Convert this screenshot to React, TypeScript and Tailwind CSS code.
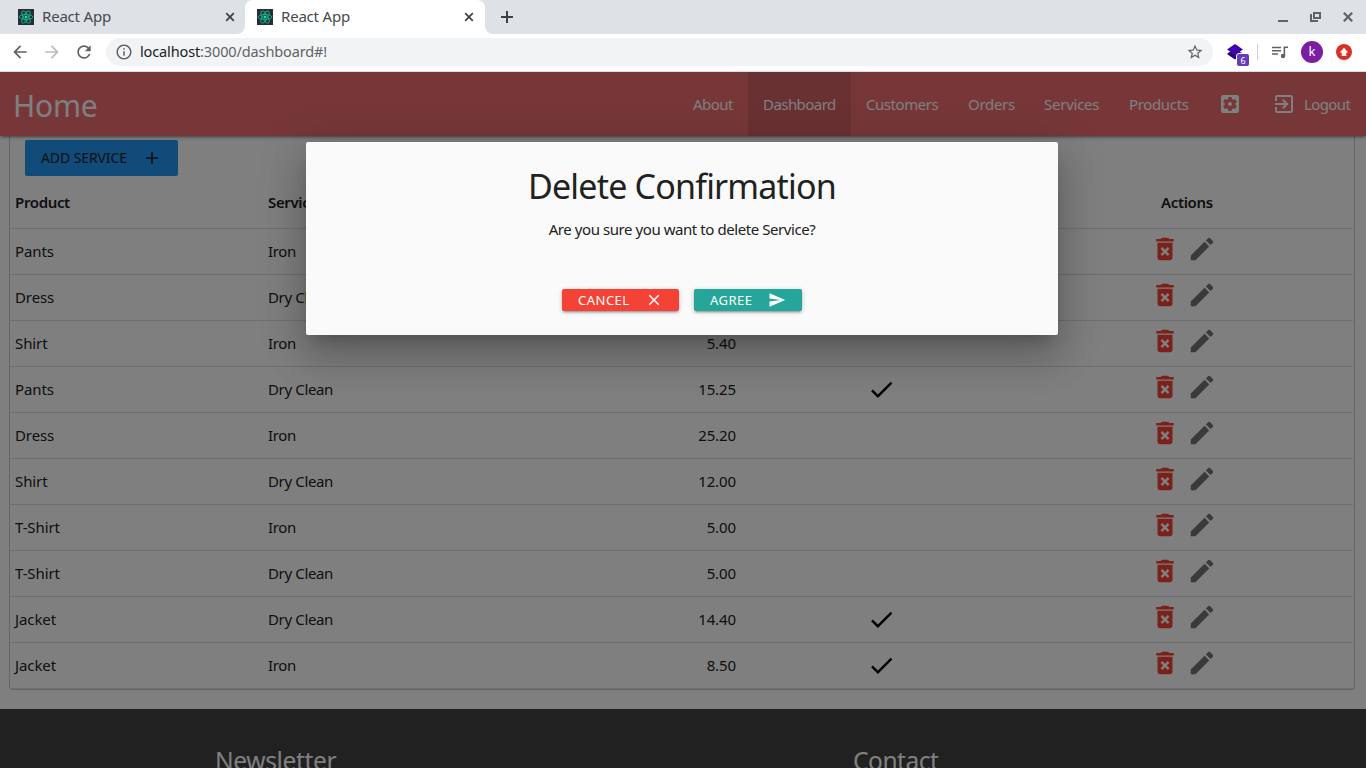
import React from "react";
import {
  MdAdd, MdArrowBack, MdArrowForward, MdCheck, MdClose, MdDeleteForever, MdEdit, MdExitToApp,
  MdInfoOutline, MdRefresh, MdSend, MdSettingsApplications, MdStarBorder,
} from "react-icons/md";

const rows = [
  { product: "Pants", service: "Iron", price: "", express: false },
  { product: "Dress", service: "Dry Clean", price: "", express: false },
  { product: "Shirt", service: "Iron", price: "5.40", express: false },
  { product: "Pants", service: "Dry Clean", price: "15.25", express: true },
  { product: "Dress", service: "Iron", price: "25.20", express: false },
  { product: "Shirt", service: "Dry Clean", price: "12.00", express: false },
  { product: "T-Shirt", service: "Iron", price: "5.00", express: false },
  { product: "T-Shirt", service: "Dry Clean", price: "5.00", express: false },
  { product: "Jacket", service: "Dry Clean", price: "14.40", express: true },
  { product: "Jacket", service: "Iron", price: "8.50", express: true },
];

function ReactFavicon() {
  return (
    <svg className="size-4 shrink-0" viewBox="0 0 16 16">
      <rect width="16" height="16" fill="#282c34" />
      <g fill="none" stroke="#0eb28e" strokeWidth="0.9">
        <ellipse cx="8" cy="8" rx="6.8" ry="2.6" />
        <ellipse cx="8" cy="8" rx="6.8" ry="2.6" transform="rotate(60 8 8)" />
        <ellipse cx="8" cy="8" rx="6.8" ry="2.6" transform="rotate(120 8 8)" />
      </g>
      <circle cx="8" cy="8" r="1.5" fill="#12e0b0" />
    </svg>
  );
}

function TabClose() {
  return (
    <svg className="size-2.5 shrink-0" viewBox="0 0 10 10" stroke="#3c4043" strokeWidth="1.7">
      <path d="M1.2 1.2l7.6 7.6M8.8 1.2L1.2 8.8" />
    </svg>
  );
}

function TabStrip() {
  return (
    <div className="flex h-[34px] bg-[#dee1e6] text-[15px] text-[#45494d]">
      <div className="flex w-[245px] items-center pl-[18px] pr-[10px]">
        <ReactFavicon />
        <span className="ml-2 flex-1 pb-0.5 tracking-[-0.2px]">React App</span>
        <TabClose />
      </div>
      <div className="relative flex w-[240px] items-center rounded-t-lg bg-white pl-3 pr-[11px]">
        <svg className="absolute -left-2 bottom-0 size-2" viewBox="0 0 8 8"><path d="M8 0v8H0a8 8 0 0 0 8-8" fill="#fff" /></svg>
        <svg className="absolute -right-2 bottom-0 size-2" viewBox="0 0 8 8"><path d="M0 0v8h8a8 8 0 0 1-8-8" fill="#fff" /></svg>
        <ReactFavicon />
        <span className="ml-2 flex-1 pb-0.5 tracking-[-0.2px]">React App</span>
        <TabClose />
      </div>
      <div className="flex flex-1 items-center pl-4">
        <svg className="size-3" viewBox="0 0 12 12" stroke="#3c4043" strokeWidth="2"><path d="M6 0v12M0 6h12" /></svg>
      </div>
      <div className="flex items-center gap-[22px] pr-[13px]">
        <svg className="size-2.5" viewBox="0 0 10 10"><path d="M0 8h10v2H0z" fill="#5f6368" /></svg>
        <svg className="h-2.5 w-[11px]" viewBox="0 0 11 10" fill="none" stroke="#5f6368" strokeWidth="2">
          <path d="M4 1h6v5H4z" /><path d="M1 2v7h7" />
        </svg>
        <svg className="size-2.5" viewBox="0 0 10 10" stroke="#5f6368" strokeWidth="2.200"><path d="M.8.8l8.400 8.400M9.200.8L.8 9.200" /></svg>
      </div>
    </div>
  );
}

function Toolbar() {
  return (
    <div className="flex h-[38px] items-center border-b border-[#dcdde0] bg-white pl-[10px] pb-px text-[#5f6368]">
      <MdArrowBack className="size-5" />
      <MdArrowForward className="ml-3 size-5 text-[#babcbe]" />
      <MdRefresh className="ml-3 size-5" />
      <div className="ml-3 flex h-7 w-[1107px] items-center rounded-full bg-[#f1f3f4] pl-[9px] pr-[9px]">
        <MdInfoOutline className="size-[18px]" />
        <span className="ml-[7px] flex-1 text-[14.500px] tracking-[-0.13px] text-[#202124]">
          localhost<span className="text-[#5f6368]">:3000/dashboard#!</span>
        </span>
        <MdStarBorder className="size-[18px]" />
      </div>
      <div className="relative ml-[14px] size-4">
        <svg className="size-4" viewBox="0 0 16 16">
          <path d="M.6 9l7.400-3 7.400 3v1.500L8 15.500.6 10.500z" fill="#22057a" />
          <path d="M8 0l8 5.500L8 11 0 5.500z" fill="#4200b0" />
        </svg>
        <span className="absolute left-[9px] top-[9px] flex size-3.5 items-center justify-center rounded-[3px] border border-white bg-[#673ab7] text-[9px] leading-none text-white">6</span>
      </div>
      <div className="ml-[14px] h-4 w-px bg-[#cfd1d4]" />
      <svg className="ml-[14px] h-3.5 w-4" viewBox="0 0 16 14" fill="none" stroke="#5f6368" strokeWidth="1.600">
        <path d="M0 2.500h9M0 5.800h9M0 9h6M16 2.300h-3.600v8.500" />
        <circle cx="11" cy="11" r="2.200" fill="#5f6368" stroke="none" />
      </svg>
      <div className="ml-[13px] flex size-[22px] items-center justify-center rounded-full bg-[#7b1fa2] text-[13px] text-white">k</div>
      <svg className="ml-[13px] size-4" viewBox="0 0 16 16">
        <circle cx="8" cy="8" r="8" fill="#d93025" />
        <path d="M8 3.800l4.200 4.700H10.300V12H5.700V8.500H3.800z" fill="#fff" />
      </svg>
    </div>
  );
}

function NavBar() {
  return (
    <nav className="relative z-10 flex h-16 shrink-0 items-center bg-[#ee6e73] text-[15px] text-white shadow-[0_2px_2px_0_rgba(0,0,0,0.14),0_3px_1px_-2px_rgba(0,0,0,0.12),0_1px_5px_0_rgba(0,0,0,0.2)]">
      <div className="w-[678px] pl-[13px] pt-0.5 text-[30px] tracking-[-0.200px]">Home</div>
      <div className="w-[70px] pl-[15px] tracking-[-0.55px]">About</div>
      <div className="flex h-16 w-[103px] items-center bg-black/10 pl-[15px] tracking-[-0.55px]">Dashboard</div>
      <div className="w-[102px] pl-[15px] tracking-[-0.45px]">Customers</div>
      <div className="w-[76px] pl-[15px] tracking-[-0.3px]">Orders</div>
      <div className="w-[85px] pl-[15px] tracking-[-0.25px]">Services</div>
      <div className="w-[90px] pl-[15px] tracking-[-0.35px]">Products</div>
      <MdSettingsApplications className="ml-3.5 size-6" />
      <MdExitToApp className="ml-[30px] size-6" />
      <div className="ml-2 tracking-[-0.6px]">Logout</div>
    </nav>
  );
}

function ServiceTable() {
  return (
    <div className="mx-[9px] flex h-[554px] w-[1346px] shrink-0 flex-col rounded-b border border-t-0 border-[#cacaca] text-[15px] text-[#212121]">
      <div className="flex h-[41px] items-start pl-[15px] pt-1">
        <div className="flex h-9 w-[153px] items-center rounded-[2px] bg-[#2196f3] pl-4 text-[14px]">
          <span className="w-[101px] pb-0.5 tracking-[-0.1px]">ADD SERVICE</span>
          <MdAdd className="size-5" />
        </div>
      </div>
      <div className="mr-px flex h-[52px] items-center border-b border-[#dedede] pl-[5px] font-semibold tracking-[-0.35px]">
        <div className="w-[253px]">Product</div>
        <div className="w-[893px]">Service</div>
        <div>Actions</div>
      </div>
      {rows.map((r, i) => (
        <div key={i} className="mr-px flex h-[46px] items-center border-b border-[#dedede] pl-[5px]">
          <div className="w-[253px] tracking-[-0.1px]">{r.product}</div>
          <div className="w-[268px] tracking-[-0.35px]">{r.service}</div>
          <div className="w-[200px] text-right tracking-[-0.1px]">{r.price}</div>
          <div className="flex w-[290px] justify-center">{r.express && <MdCheck className="size-[29px] text-black" />}</div>
          <div className="ml-[124px] flex gap-[7px] pb-[5px]">
            <MdDeleteForever className="size-[30px] text-[#f44336]" />
            <MdEdit className="size-[30px] text-[#757575]" />
          </div>
        </div>
      ))}
    </div>
  );
}

function DeleteModal() {
  return (
    <div className="absolute left-[306px] top-[70px] flex h-[193px] w-[752px] flex-col items-center rounded-[2px] bg-[#fafafa] text-[#212121] shadow-[0_24px_38px_3px_rgba(0,0,0,0.14),0_9px_46px_8px_rgba(0,0,0,0.12),0_11px_15px_-7px_rgba(0,0,0,0.2)]">
      <h4 className="mt-6 text-[34px] leading-10 tracking-[-0.8px]">Delete Confirmation</h4>
      <p className="mt-[11px] text-[15px] leading-6 tracking-[-0.43px]">Are you sure you want to delete Service?</p>
      <div className="mt-12 flex gap-[15px] text-[13px] text-white">
        <button className="flex h-[22px] w-[117px] items-center rounded-[2px] bg-[#f44336] pl-4 shadow-[0_2px_2px_0_rgba(0,0,0,0.14),0_3px_1px_-2px_rgba(0,0,0,0.12),0_1px_5px_0_rgba(0,0,0,0.2)]">
          <span className="w-[67px] pt-px text-left tracking-[0.5px]">CANCEL</span>
          <MdClose className="size-[18px]" />
        </button>
        <button className="flex h-[22px] w-[108px] items-center rounded-[2px] bg-[#26a69a] pl-4 shadow-[0_2px_2px_0_rgba(0,0,0,0.14),0_3px_1px_-2px_rgba(0,0,0,0.12),0_1px_5px_0_rgba(0,0,0,0.2)]">
          <span className="w-[58px] pt-px text-left tracking-[0.5px]">AGREE</span>
          <MdSend className="size-[18px]" />
        </button>
      </div>
    </div>
  );
}

export default function App() {
  return (
    <div className="flex h-[768px] w-[1366px] flex-col overflow-hidden bg-white font-['Noto_Sans',sans-serif]">
      <TabStrip />
      <Toolbar />
      <main className="relative flex h-[696px] flex-col overflow-hidden bg-white">
        <NavBar />
        <ServiceTable />
        <footer className="mt-[19px] flex h-[100px] shrink-0 bg-[#424242] pl-[215px] pt-[34px] text-[24.600px] text-white">
          <div className="w-[638px] tracking-[-0.4px]">Newsletter</div>
          <div className="tracking-[-0.5px]">Contact</div>
        </footer>
        <div className="absolute inset-0 z-20 bg-black/50" />
        <div className="absolute inset-0 z-30 overflow-hidden"><DeleteModal /></div>
      </main>
    </div>
  );
}
